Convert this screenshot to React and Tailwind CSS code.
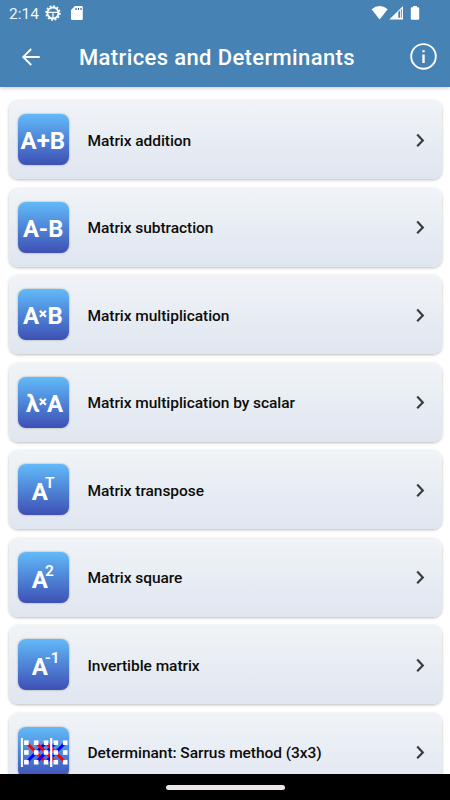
import React from 'react';

const COLS = [8.4, 18.2, 28, 37.8, 47.2];
const ROWS = [15.7, 25.5, 35.2];

function Glyph({ x, y, size = 24, width, weight = 700, children }) {
  return (
    <text x={x} y={y} fontSize={size} fontWeight={weight} textLength={width} lengthAdjust="spacingAndGlyphs" fill="white">
      {children}
    </text>
  );
}

function Times() {
  return <path d="M21.9 21.8l6 6m0-6l-6 6" stroke="white" strokeWidth="2.3" />;
}

function Power({ children }) {
  return (
    <>
      <Glyph x="13.8" y="36.4">A</Glyph>
      <Glyph x="27" y="23.6" size="15.5" weight={600}>{children}</Glyph>
    </>
  );
}

function Sarrus() {
  return (
    <g>
      {[0, 1, 2].map((i) => (
        <line key={'b' + i} x1={COLS[i]} y1={ROWS[2]} x2={COLS[i + 2]} y2={ROWS[0]} stroke="#0000ff" strokeWidth="3" />
      ))}
      {[0, 1, 2].map((i) => (
        <line key={'r' + i} x1={COLS[i]} y1={ROWS[0]} x2={COLS[i + 2]} y2={ROWS[2]} stroke="#ff0000" strokeWidth="3" />
      ))}
      {[1, 2].map((i) => (
        <line key={'c' + i} x1={COLS[i]} y1={ROWS[2]} x2={COLS[i + 1]} y2={ROWS[1]} stroke="#0000ff" strokeWidth="3" />
      ))}
      {ROWS.map((y) => COLS.map((x) => <rect key={x + '-' + y} x={x - 2.3} y={y - 2.3} width="4.6" height="4.6" fill="white" />))}
      <rect x="2.9" y="11" width="2" height="29" fill="white" />
      <rect x="32.1" y="11" width="2.2" height="29" fill="white" />
    </g>
  );
}

const ITEMS = [
  { label: 'Matrix addition', icon: <Glyph x="2.6" y="34.5" width="44.5">A+B</Glyph> },
  { label: 'Matrix subtraction', icon: <Glyph x="4.9" y="34.5" width="40.5">A-B</Glyph> },
  { label: 'Matrix multiplication', icon: <><Glyph x="5" y="34.5">A</Glyph><Times /><Glyph x="29.4" y="34.5">B</Glyph></> },
  { label: 'Matrix multiplication by scalar', icon: <><Glyph x="8" y="34.5">λ</Glyph><Times /><Glyph x="28.9" y="34.5">A</Glyph></> },
  { label: 'Matrix transpose', icon: <Power>T</Power> },
  { label: 'Matrix square', icon: <Power>2</Power> },
  { label: 'Invertible matrix', icon: <Power>-1</Power> },
  { label: 'Determinant: Sarrus method (3x3)', icon: <Sarrus /> },
];

function StatusBar() {
  return (
    <div className="flex h-[27px] items-end justify-between pl-[9px] pr-[30px]">
      <div className="flex h-[21px] items-start text-[15.5px] leading-[17px]">
        <span className="w-[36px] text-white/95">2:14</span>
        <svg className="-mt-px" width="16" height="16" viewBox="0 0 16 16" fill="none" stroke="white">
          <circle cx="8" cy="8" r="5.5" strokeWidth="1.8" />
          <circle cx="8" cy="8" r="6.9" strokeWidth="1.6" strokeDasharray="1.9 1.71" />
          <path d="M3 7.3h10M8 7v6" strokeWidth="1.3" />
        </svg>
        <svg className="ml-[10px]" width="12" height="15" viewBox="0 0 12 15">
          <path d="M4 0h6.6q1.2 0 1.2 1.2v11.6q0 1.2-1.2 1.2H1.2Q0 14 0 12.8V4z" fill="white" />
          <path d="M5 2v2M7.5 2v2M10 2v2" stroke="#2450a0" strokeWidth="1.1" />
        </svg>
      </div>
      <svg width="50" height="21" viewBox="0 0 50 21" fill="white">
        <path d="M1.6 3.2Q9.6-3.2 17.7 3.2L9.6 13.5z" />
        <path d="M33 0v13.4H19.3z" />
        <path d="M28.3 6l1.8-1.8v7.6h-1.8z" fill="#4682b4" />
        <path d="M31.4 3v8.8" stroke="#6a9cc5" strokeWidth="1" />
        <path d="M43.2 0h3.7v1.3h1.3q1 0 1 1v10.4q0 1-1 1h-6.4q-1 0-1-1V2.3q0-1 1-1h1.4z" />
      </svg>
    </div>
  );
}

export default function App() {
  return (
    <div className="flex h-[800px] w-[450px] flex-col overflow-hidden bg-white font-['Roboto',sans-serif]">
      <header className="z-10 h-[87px] shrink-0 bg-[#4682b4] text-white shadow-[0_1px_4px_rgba(0,0,0,0.22)]">
        <StatusBar />
        <div className="flex h-[60px] items-center pl-[21px] pr-[13px]">
          <svg width="20" height="20" viewBox="0 0 20 20" fill="none" stroke="white" strokeWidth="1.8">
            <path d="M18.7 10H2.3M10.2 2L2.2 10l8 8" />
          </svg>
          <h1 className="ml-[38px] mt-[2px] flex-1 whitespace-nowrap text-[22px] font-medium leading-[28px] tracking-[0.37px]">Matrices and Determinants</h1>
          <svg width="27" height="28" viewBox="0 0 27 28" fill="none" stroke="white">
            <circle cx="13.5" cy="13.4" r="12.3" strokeWidth="1.9" />
            <path d="M13.5 7.2v2M13.5 11.4v8.6" strokeWidth="2.4" />
          </svg>
        </div>
      </header>

      <main className="flex min-h-0 flex-1 flex-col gap-[8.5px] overflow-hidden px-[8.5px] pt-[13.4px]">
        {ITEMS.map((item) => (
          <div
            key={item.label}
            className="flex h-[79px] shrink-0 items-center rounded-[9px] bg-linear-to-b from-[#f0f4f8] to-[#e0e6f0] pl-[9.9px] pr-[16.9px] shadow-[0_1px_3px_rgba(0,0,0,0.27)]"
          >
            <div className="size-[51px] shrink-0 overflow-hidden rounded-[8px] bg-linear-to-b from-[#62baf9] to-[#3e50b5] shadow-[0_0_2px_rgba(80,60,30,0.5)]">
              <svg width="51" height="51" viewBox="0 0 51 51">{item.icon}</svg>
            </div>
            <span className="ml-[18.1px] mt-[1.4px] flex-1 whitespace-nowrap text-[15.5px] font-medium leading-[20px] tracking-[-0.05px] text-[#0c0c0c]">{item.label}</span>
            <svg width="10" height="16" viewBox="0 0 10 16" fill="none" stroke="#3b3c3e" strokeWidth="2.2">
              <path d="M2.2 2.6L7.8 8.4 2.2 14.2" />
            </svg>
          </div>
        ))}
      </main>

      <footer className="flex h-[26px] shrink-0 justify-center bg-black pt-[10.5px]">
        <div className="h-[5px] w-[119px] rounded-full bg-[#ece6ec]" />
      </footer>
    </div>
  );
}
